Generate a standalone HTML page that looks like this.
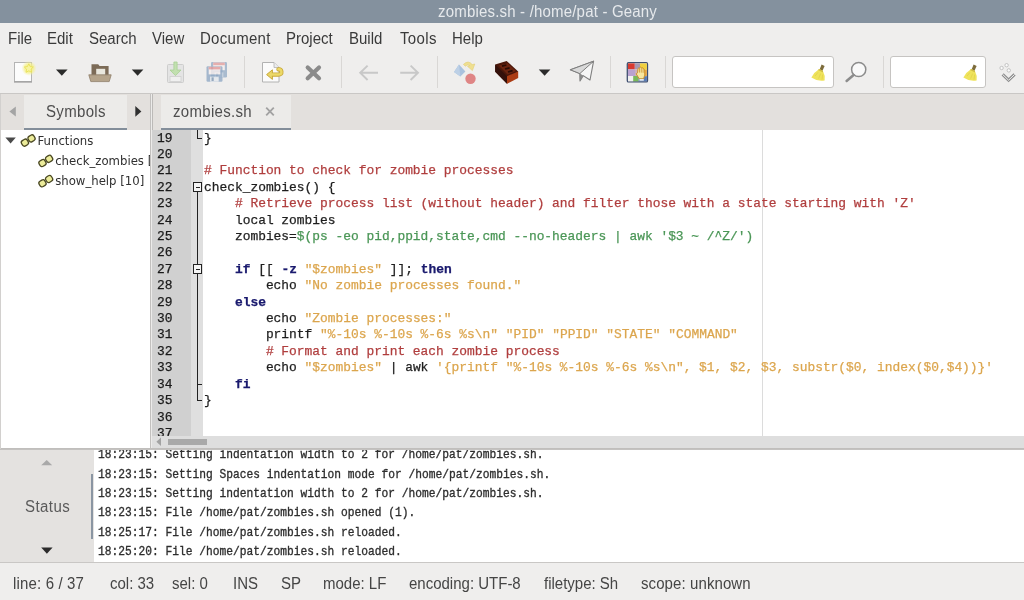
<!DOCTYPE html>
<html lang="en">
<head>
<meta charset="utf-8">
<title>zombies.sh - /home/pat - Geany</title>
<style>
html,body{margin:0;padding:0;}
body{width:1024px;height:600px;overflow:hidden;position:relative;background:#efeeed;font-family:"Liberation Sans",sans-serif;color:#3c3c3c;}
.abs{position:absolute;}
#title,#menu,#toolbar,#nbhead,#side,#editor,#msg,#msgtext,#status{will-change:transform;}
#title{left:0;top:0;width:1024px;height:22.5px;background:#84919e;color:#e6e9ec;font-size:16px;line-height:23.4px;letter-spacing:0.2px;}
#title span{position:absolute;left:437.5px;top:0;white-space:nowrap;transform:scaleX(0.9375);transform-origin:0 50%;}
#menu{left:0;top:22.5px;width:1024px;height:30.5px;background:#efeeed;}
#menu span{position:absolute;top:-0.2px;line-height:32px;font-size:16px;transform:scaleX(0.9375);transform-origin:0 50%;color:#3a3a3a;white-space:nowrap;}
#toolbar{left:0;top:53px;width:1024px;height:40px;background:#efeeed;border-bottom:1px solid #c9c7c5;}
.sep{position:absolute;top:3px;width:1px;height:32px;background:#d9d7d5;}
.entry{position:absolute;background:#fff;border:1px solid #c6c4c2;border-radius:3px;box-sizing:border-box;}
#nbhead{left:0;top:94px;width:1024px;height:35.5px;background:#e3e0dd;}
.tab{position:absolute;top:0.5px;height:35px;background:#ecebe9;border-bottom:2.6px solid #838e9a;box-sizing:border-box;font-size:16px;line-height:34px;color:#4e4e4e;white-space:nowrap;letter-spacing:0.2px;}
.tab span{transform:scaleX(0.9375);transform-origin:0 50%;}
#side{left:0;top:130px;width:150px;height:317.5px;background:#fff;overflow:hidden;}
#side div{position:absolute;font-size:13px;line-height:20px;white-space:nowrap;color:#303030;font-family:"DejaVu Sans Condensed","DejaVu Sans","Liberation Sans",sans-serif;}
#paned{left:150px;top:94px;width:2.6px;height:354px;background:#ecebea;border-left:1px solid #c2c0be;border-right:1px solid #bcbab8;box-sizing:border-box;}
#hline{left:0;top:447.6px;width:1024px;height:1px;background:#c0bebc;}
#editor{left:152px;top:130px;width:872px;height:318px;background:#fff;overflow:hidden;}
#lnm{left:0;top:0;width:38.6px;height:306px;background:#d0d0d0;}
#fold{left:38.6px;top:0;width:12.4px;height:306px;background:#dfdfdf;}
#code{left:0;top:0.6px;width:872px;font-family:"Liberation Mono",monospace;font-size:12.9px;line-height:16.42px;color:#1e1e1e;-webkit-text-stroke:0.25px;}
#code .l{height:16.42px;position:relative;}
#code .n{position:absolute;left:5px;top:0;color:#1a1a1a;}
#code .t{position:absolute;left:52px;top:0;white-space:pre;}
.c{color:#b03e3e;}
.g{color:#4a9656;}
.s{color:#dca64e;}
.k{color:#1a1a6e;font-weight:bold;}
#edge{left:609.6px;top:0;width:1px;height:306px;background:#dcdcdc;}
#hscroll{left:0;top:306px;width:872px;height:12px;background:#dedede;}
#msg{left:0;top:449px;width:1024px;height:114px;background:#e4e2e0;border-top:1px solid #c4c2c0;border-bottom:1px solid #c9c7c5;box-sizing:border-box;}
#msgtext{left:94px;top:450px;width:930px;height:112px;background:#fff;overflow:hidden;font-family:"Liberation Mono",monospace;font-size:11.25px;color:#2e2e2e;white-space:pre;-webkit-text-stroke:0.3px;}
#msgtext div{position:absolute;left:4px;line-height:19px;height:19px;transform:scaleY(1.1);transform-origin:0 12.5px;}
#status{left:0;top:563px;width:1024px;height:37px;background:#efeeed;}
#status span{position:absolute;top:3.9px;line-height:34px;font-size:16px;transform:scaleX(0.9375);transform-origin:0 50%;color:#454545;white-space:nowrap;}
</style>
</head>
<body>
<div id="title" class="abs"><span>zombies.sh - /home/pat - Geany</span></div>

<div id="menu" class="abs">
<span style="left:8px">File</span>
<span style="left:47px">Edit</span>
<span style="left:89px">Search</span>
<span style="left:152px">View</span>
<span style="left:200px;letter-spacing:0.3px">Document</span>
<span style="left:286px">Project</span>
<span style="left:349px">Build</span>
<span style="left:400px;letter-spacing:0.4px">Tools</span>
<span style="left:452px">Help</span>
</div>

<div id="toolbar" class="abs">
<div class="sep" style="left:244px"></div>
<div class="sep" style="left:340.5px"></div>
<div class="sep" style="left:437px"></div>
<div class="sep" style="left:609.5px"></div>
<div class="sep" style="left:664.5px"></div>
<div class="sep" style="left:882.5px"></div>
<div class="entry" style="left:672.3px;top:3.4px;width:162px;height:32px"></div>
<div class="entry" style="left:890.4px;top:3.4px;width:95.4px;height:32px"></div>
<svg class="abs" style="left:0;top:0" width="1024" height="41" viewBox="0 53 1024 41">
<defs>
<radialGradient id="glow"><stop offset="0" stop-color="#f7f27a" stop-opacity="1"/><stop offset="0.6" stop-color="#f5f08a" stop-opacity="0.75"/><stop offset="1" stop-color="#f5f0a0" stop-opacity="0"/></radialGradient>
<g id="broom"><path d="M10.6 0.6 L13.6 2 L11.4 7 L8.6 5.6 Z" fill="#7d6c3c"/><path d="M8.2 5 L11.8 6.8 Q14.4 11.6 13.6 16.4 Q6.4 17.6 0.4 13.4 Q3.2 8 8.2 5 Z" fill="#efe35c"/><path d="M8.2 5 L11.8 6.8 L12.2 8.4 L7 6 Z" fill="#cdbb45"/><path d="M4 12 L7 8.4 M7.6 14.6 L9.6 9.6 M11 15.6 L11.6 10.6" stroke="#e0d048" stroke-width="0.7"/></g>
<g id="floppy"><rect x="0" y="0" width="16" height="15.5" rx="1.2" fill="#92aac6"/><rect x="2.2" y="0.6" width="11.6" height="7.6" fill="#f6eeee"/><rect x="2.2" y="0.6" width="11.6" height="2.6" fill="#e29a9a"/><rect x="3.6" y="10.4" width="8.6" height="5.1" fill="#e4e8ee"/><rect x="5" y="11.2" width="2.2" height="3.6" fill="#7f97b3"/></g>
</defs>
<!-- new -->
<rect x="14.5" y="62.5" width="17" height="19" fill="#fcfcfc" stroke="#b4b4b4"/>
<path d="M14 82 H32" stroke="#9a9a9a" stroke-width="1.2"/>
<circle cx="29" cy="68.3" r="7.6" fill="url(#glow)"/>
<path d="M28.8 63.8 L30.2 66.6 L33.3 67 L31 69.2 L31.6 72.3 L28.8 70.8 L26 72.3 L26.6 69.2 L24.3 67 L27.4 66.6 Z" fill="#f8f4a0" stroke="#e6de50" stroke-width="0.8" stroke-linejoin="round"/>
<path d="M56 69.5 H67.6 L61.8 75.8 Z" fill="#2b2b2b"/>
<!-- open -->
<path d="M91.5 64.2 H98.2 L99.6 66 H108.6 V77 H91.5 Z" fill="#7c6b57"/>
<rect x="96.2" y="68.8" width="9" height="7.4" fill="#e9e7dd"/>
<path d="M88.8 74.8 H111.2 L109.2 81.6 H90.8 Z" fill="#b5a48b" stroke="#8f7f69" stroke-width="0.8"/>
<path d="M131.8 69.5 H143.4 L137.6 75.8 Z" fill="#2b2b2b"/>
<!-- save disabled -->
<rect x="167.5" y="64.5" width="16" height="18" rx="1" fill="#e4e4e4" stroke="#cdcdcd"/>
<rect x="170" y="76.5" width="11" height="5" fill="#f0f0f0" stroke="#cfcfcf" stroke-width="0.8"/>
<path d="M173.9 62 H177.1 V70 H181 L175.5 75.6 L170 70 H173.9 Z" fill="#c2e0b0" stroke="#a8d094" stroke-width="0.8"/>
<!-- save all disabled -->
<use href="#floppy" x="211" y="62" opacity="0.75"/>
<use href="#floppy" x="206.5" y="66.2" opacity="0.8"/>
<!-- revert -->
<path d="M262.5 62.5 H274 L279 67.5 V82 H262.5 Z" fill="#fbfbfb" stroke="#b2b2b2"/>
<path d="M274 62.5 V67.5 H279" fill="#ececec" stroke="#b2b2b2" stroke-width="0.8"/>
<path d="M271 74.6 H278.4 Q281.8 74.6 281.4 71.6 Q281 69 278.4 69.3" fill="none" stroke="#c9a93a" stroke-width="4.2" stroke-linecap="round"/>
<path d="M266.6 74.6 L272.4 69.8 V79.4 Z" fill="#e9d465" stroke="#c9a93a" stroke-width="1" stroke-linejoin="round"/>
<path d="M271 74.6 H278.4 Q281.8 74.6 281.4 71.6 Q281 69 278.4 69.3" fill="none" stroke="#ecd968" stroke-width="2.5" stroke-linecap="round"/>
<!-- close -->
<path d="M307.7 67.5 L319 78.2 M319 67.5 L307.7 78.2" stroke="#8b8b8b" stroke-width="4.2" stroke-linecap="round"/>
<!-- nav arrows -->
<path d="M378 72.8 H360.5 M367.6 65.6 L360.2 72.8 L367.6 80" fill="none" stroke="#c8c8c8" stroke-width="1.9"/>
<path d="M400.2 72.8 H417.7 M410.6 65.6 L418 72.8 L410.6 80" fill="none" stroke="#c8c8c8" stroke-width="1.9"/>
<!-- compile -->
<path d="M459 64.4 L465.4 71.6 L460.4 76.4 L454 72 Z" fill="#a9c2de"/>
<path d="M459 64.4 L460.4 76.4 L454 72 Z" fill="#bdd0e6"/>
<path d="M463.4 64.4 Q468.4 59.6 472.2 64.6 L474.8 64 L472.4 70.6 L467.4 66.2 L469.8 65.6 Q468 63.6 465.4 66.2 Z" fill="#efdf90" stroke="#e2cf74" stroke-width="0.6"/>
<circle cx="470.5" cy="78.8" r="5.2" fill="#df8585"/>
<!-- brick -->
<path d="M495.2 64.6 L506.6 61 L518.2 71.4 L507 83.8 L495.2 71.8 Z" fill="#4a170a"/>
<path d="M507 76.2 L518.2 71.4 V78 L507 83.8 Z" fill="#ab3c14"/>
<path d="M495.2 64.6 L507 76.2 V83.8 L495.2 71.8 Z" fill="#33100a"/>
<path d="M498.6 65.6 L507.6 63.2 L516 71 L507.6 74.4 Z" fill="#6a2410"/>
<path d="M502 66.2 L506.4 65 M505 69 L509.6 67.8 M508 72 L512.6 70.6" stroke="#2a0c06" stroke-width="1.8"/>
<path d="M538.8 69.5 H550.4 L544.6 75.8 Z" fill="#2b2b2b"/>
<!-- plane -->
<path d="M593.6 61.2 L570.4 69.8 L579.8 73.6 L580 81 L583.2 75.6 L590 80 Z" fill="#f6f6f6" stroke="#7e7e7e" stroke-width="1.1" stroke-linejoin="round"/>
<path d="M593.6 61.2 L570.4 69.8 L579.8 73.6 Z" fill="#d9d9d9" stroke="#7e7e7e" stroke-width="1" stroke-linejoin="round"/>
<path d="M579.8 73.6 L580 81 L583.2 75.6 Z" fill="#8a8a8a"/>
<!-- colour chooser -->
<rect x="627.3" y="62.7" width="20.2" height="19.2" rx="1.2" fill="#f0efec" stroke="#3f4f70" stroke-width="1.3"/>
<rect x="628" y="63.4" width="6.8" height="6" fill="#d83a30"/>
<rect x="634.8" y="63.4" width="5.2" height="6" fill="#a898b0"/>
<rect x="640" y="63.4" width="6.9" height="6.4" fill="#efd040"/>
<rect x="628" y="69.4" width="7" height="6.6" fill="#b9a2d0"/>
<rect x="635" y="69.4" width="5" height="6.6" fill="#cfb0b8"/>
<rect x="640" y="69.8" width="6.9" height="6.4" fill="#e6a848"/>
<rect x="628" y="76" width="5.2" height="5.3" fill="#f1f1ef"/>
<rect x="633.2" y="76" width="5.4" height="5.3" fill="#7aba5a"/>
<rect x="638.6" y="76.2" width="8.3" height="5.1" fill="#5a7cb4"/>
<path d="M636.2 73.8 L637.6 72.8 L638 68.6 Q638.7 67.6 639.4 68.6 L639.6 67.6 Q640.4 66.6 641.2 67.6 L641.4 68 Q642.2 67.2 643 68.2 L643.2 69 Q644 68.6 644.6 69.6 L644.8 75 L643.6 78.8 L639.2 78.8 Z" fill="#f7e6a0" stroke="#c88a22" stroke-width="0.9" stroke-linejoin="round"/>
<path d="M639.5 68.8 V72.6 M641.3 68.2 V72.6 M643.1 69.2 V72.8" stroke="#c88a22" stroke-width="0.7"/>
<path d="M639.4 79.9 H643.8" stroke="#fafafa" stroke-width="1.5"/>
<!-- magnifier -->
<circle cx="858.7" cy="69.5" r="7.1" fill="#f9f9f9" stroke="#8c8c8c" stroke-width="1.5"/>
<path d="M853.6 75 L846.6 81" stroke="#8c8c8c" stroke-width="2.5" stroke-linecap="round"/>
<!-- jump -->
<circle cx="1001.6" cy="68" r="1.7" fill="#fafafa" stroke="#b8b8b8" stroke-width="0.8"/>
<circle cx="1006.6" cy="65.2" r="1.7" fill="#fafafa" stroke="#b8b8b8" stroke-width="0.8"/>
<circle cx="1008.8" cy="70.4" r="1.7" fill="#fafafa" stroke="#b8b8b8" stroke-width="0.8"/>
<path d="M1002.6 74.4 L1008.6 80.2 L1014.6 74.4" fill="none" stroke="#8e8e8e" stroke-width="3" stroke-linejoin="miter"/>
<path d="M1002.6 74.4 L1008.6 80.2 L1014.6 74.4" fill="none" stroke="#f4f4f4" stroke-width="1"/>
</svg>
<svg class="abs" style="left:811px;top:10.6px" width="15" height="18" viewBox="0 0 15 18"><use href="#broom"/></svg>
<svg class="abs" style="left:962.6px;top:10.6px" width="15" height="18" viewBox="0 0 15 18"><use href="#broom"/></svg>
</div>

<div id="nbhead" class="abs">
<div class="tab" style="left:24px;width:103px;"><span style="position:absolute;left:21.5px;letter-spacing:0.35px">Symbols</span></div>
<div class="tab" style="left:161px;width:130px;"><span style="position:absolute;left:12px;letter-spacing:0.32px">zombies.sh</span></div>
<svg class="abs" style="left:0;top:0" width="152" height="36" viewBox="0 94 152 36">
<path d="M15.8 106.4 V116.4 L9.4 111.4 Z" fill="#a4a4a4"/>
<path d="M135.3 106 V116.8 L141.4 111.4 Z" fill="#303030"/>
</svg>
<svg class="abs" style="left:262px;top:10px" width="16" height="16" viewBox="262 104 16 16"><path d="M266.2 107.6 L273.8 115.4 M273.8 107.6 L266.2 115.4" stroke="#a2a2a2" stroke-width="1.8"/></svg>
</div>

<div id="side" class="abs">
<svg class="abs" style="left:0;top:0" width="150" height="70" viewBox="0 130 150 70">
<defs><g id="lnk"><g transform="rotate(-32 3.9 8.7)"><rect x="0.6" y="5.6" width="6.6" height="6.2" rx="2.2" fill="#ecec9a" stroke="#4a4822" stroke-width="1.3"/></g><g transform="rotate(-32 10.5 4.4)"><rect x="7.2" y="1.3" width="6.6" height="6.2" rx="2.2" fill="#ecec9a" stroke="#4a4822" stroke-width="1.3"/></g></g></defs>
<path d="M5.4 137.4 H15.8 L10.6 143.4 Z" fill="#4a4a4a"/>
<use href="#lnk" x="21" y="134"/>
<use href="#lnk" x="38.6" y="154.4"/>
<use href="#lnk" x="38.6" y="174.6"/>
</svg>
<div style="left:37.6px;top:1px">Functions</div>
<div style="left:55.2px;top:21.2px">check_zombies [22]</div>
<div style="left:55.2px;top:41.4px">show_help [10]</div>
</div>
<div id="paned" class="abs"></div>

<div id="editor" class="abs">
<div id="lnm" class="abs"></div>
<div id="fold" class="abs"></div>
<div id="edge" class="abs"></div>
<svg class="abs" style="left:36px;top:0" width="16" height="306" viewBox="188 130 16 306" shape-rendering="crispEdges">
<path d="M197.5 130 V138.5 H202" fill="none" stroke="#222" stroke-width="1"/>
<path d="M197.5 191 V400.5 H202 M197.5 384.5 H202" fill="none" stroke="#222" stroke-width="1"/>
<rect x="193.5" y="182.5" width="8" height="9" fill="#f4f4f4" stroke="#222"/><path d="M195.5 187.5 H200" stroke="#222"/>
<rect x="193.5" y="264.5" width="8" height="9" fill="#f4f4f4" stroke="#222"/><path d="M195.5 269.5 H200" stroke="#222"/>
</svg>
<div id="code" class="abs">
<div class="l"><span class="n">19</span><span class="t">}</span></div>
<div class="l"><span class="n">20</span><span class="t"></span></div>
<div class="l"><span class="n">21</span><span class="t"><span class="c"># Function to check for zombie processes</span></span></div>
<div class="l"><span class="n">22</span><span class="t">check_zombies() {</span></div>
<div class="l"><span class="n">23</span><span class="t">    <span class="c"># Retrieve process list (without header) and filter those with a state starting with 'Z'</span></span></div>
<div class="l"><span class="n">24</span><span class="t">    local zombies</span></div>
<div class="l"><span class="n">25</span><span class="t">    zombies=<span class="g">$(ps -eo pid,ppid,state,cmd --no-headers | awk '$3 ~ /^Z/')</span></span></div>
<div class="l"><span class="n">26</span><span class="t"></span></div>
<div class="l"><span class="n">27</span><span class="t">    <span class="k">if</span> [[ <span class="k">-z</span> <span class="s">"$zombies"</span> ]]; <span class="k">then</span></span></div>
<div class="l"><span class="n">28</span><span class="t">        echo <span class="s">"No zombie processes found."</span></span></div>
<div class="l"><span class="n">29</span><span class="t">    <span class="k">else</span></span></div>
<div class="l"><span class="n">30</span><span class="t">        echo <span class="s">"Zombie processes:"</span></span></div>
<div class="l"><span class="n">31</span><span class="t">        printf <span class="s">"%-10s %-10s %-6s %s\n"</span> <span class="s">"PID"</span> <span class="s">"PPID"</span> <span class="s">"STATE"</span> <span class="s">"COMMAND"</span></span></div>
<div class="l"><span class="n">32</span><span class="t">        <span class="c"># Format and print each zombie process</span></span></div>
<div class="l"><span class="n">33</span><span class="t">        echo <span class="s">"$zombies"</span> | awk <span class="s">'{printf "%-10s %-10s %-6s %s\n", $1, $2, $3, substr($0, index($0,$4))}'</span></span></div>
<div class="l"><span class="n">34</span><span class="t">    <span class="k">fi</span></span></div>
<div class="l"><span class="n">35</span><span class="t">}</span></div>
<div class="l"><span class="n">36</span><span class="t"></span></div>
<div class="l"><span class="n">37</span><span class="t"></span></div>
</div>
<div id="hscroll" class="abs"><div class="abs" style="left:16px;top:2.5px;width:39px;height:6.5px;background:#a9a9a9"></div><svg class="abs" style="left:0;top:0" width="16" height="12" viewBox="152 436 16 12"><path d="M161 437.6 V446 L156.4 441.8 Z" fill="#a2a2a2"/></svg></div>
</div>

<div id="hline" class="abs"></div>
<div class="abs" style="left:0;top:94px;width:1px;height:468px;background:#d2d0ce"></div>
<div id="msg" class="abs">
<span style="position:absolute;left:24.5px;top:46.5px;font-size:16px;letter-spacing:0.48px;line-height:20px;color:#5a5a5a;transform:scaleX(0.9375);transform-origin:0 50%">Status</span>
<div class="abs" style="left:90.5px;top:24px;width:2.5px;height:65px;background:#8a95a2"></div>
<svg class="abs" style="left:36px;top:6px" width="22" height="100" viewBox="36 456 22 100">
<path d="M41.2 465.2 H52.2 L46.7 460 Z" fill="#a9a9a9"/>
<path d="M41.2 547.6 H52.6 L46.9 553.8 Z" fill="#2b2b2b"/>
</svg>
</div>
<div id="msgtext" class="abs">
<div style="top:-3.6px">18:23:15: Setting indentation width to 2 for /home/pat/zombies.sh.</div>
<div style="top:15.75px">18:23:15: Setting Spaces indentation mode for /home/pat/zombies.sh.</div>
<div style="top:35.1px">18:23:15: Setting indentation width to 2 for /home/pat/zombies.sh.</div>
<div style="top:54.45px">18:23:15: File /home/pat/zombies.sh opened (1).</div>
<div style="top:73.8px">18:25:17: File /home/pat/zombies.sh reloaded.</div>
<div style="top:93.15px">18:25:20: File /home/pat/zombies.sh reloaded.</div>
</div>

<div id="status" class="abs">
<span style="left:13px;letter-spacing:0.17px">line: 6 / 37</span>
<span style="left:110px">col: 33</span>
<span style="left:172px">sel: 0</span>
<span style="left:233px">INS</span>
<span style="left:281px">SP</span>
<span style="left:323px">mode: LF</span>
<span style="left:409px">encoding: UTF-8</span>
<span style="left:544px">filetype: Sh</span>
<span style="left:641px;letter-spacing:0.1px">scope: unknown</span>
</div>
</body>
</html>
